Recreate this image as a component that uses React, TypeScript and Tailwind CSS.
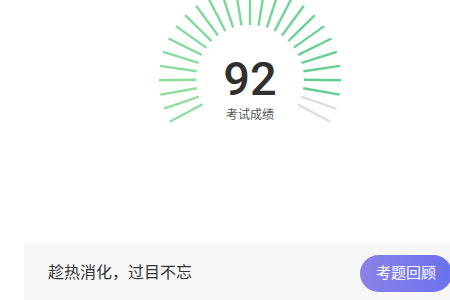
const ticks = 27;
const score = 92;
const startDeg = 152;
const sweep = 236;
const inner = 54;
const outer = 91;

// 前 25 根亮綠色，其餘灰色
const lit = Math.round((score / 100) * ticks);

function mix(a: string, b: string, t: number) {
  const pa = [1, 3, 5].map((i) => parseInt(a.slice(i, i + 2), 16));
  const pb = [1, 3, 5].map((i) => parseInt(b.slice(i, i + 2), 16));
  const c = pa.map((v, i) => Math.round(v + (pb[i] - v) * t));
  return `rgb(${c[0]},${c[1]},${c[2]})`;
}

function Gauge() {
  return (
    <svg width={200} height={160} viewBox="-100 -79 200 160">
      {Array.from({ length: ticks }).map((_, i) => {
        const a = ((startDeg + (i * sweep) / (ticks - 1)) * Math.PI) / 180;
        const on = i < lit;
        return (
          <line
            key={i}
            x1={inner * Math.cos(a)}
            y1={inner * Math.sin(a)}
            x2={outer * Math.cos(a)}
            y2={outer * Math.sin(a)}
            stroke={on ? mix("#93dfa0", "#5ccd8c", i / (ticks - 1)) : "#dedede"}
            strokeWidth={2.4}
          />
        );
      })}
    </svg>
  );
}

export default function App() {
  return (
    <div
      className="w-[450px] h-[300px] overflow-hidden bg-white"
      style={{ fontFamily: '"Liberation Sans", "Noto Sans CJK SC", sans-serif' }}
    >
      <div className="h-[243px]">
        <div className="relative ml-[150px] w-[200px] h-[160px]">
          <Gauge />
          <div className="absolute inset-x-0 top-[55px] flex flex-col items-center">
            <div className="font-[Roboto] font-medium text-[47px] leading-none text-[#303030]">
              {score}
            </div>
            <div className="mt-[5px] text-[12px] leading-4 text-[#555]">考试成绩</div>
          </div>
        </div>
      </div>
      <div className="ml-[24px] h-[60px] bg-[#f7f7f7] flex items-center justify-between pl-[24px]">
        <div className="text-[16px] text-[#333]">趁热消化，过目不忘</div>
        <button className="h-[37px] w-[92px] -mr-[2px] rounded-full bg-gradient-to-r from-[#8b82e6] to-[#6b72ef] text-[15px] text-white">
          考题回顾
        </button>
      </div>
    </div>
  );
}
